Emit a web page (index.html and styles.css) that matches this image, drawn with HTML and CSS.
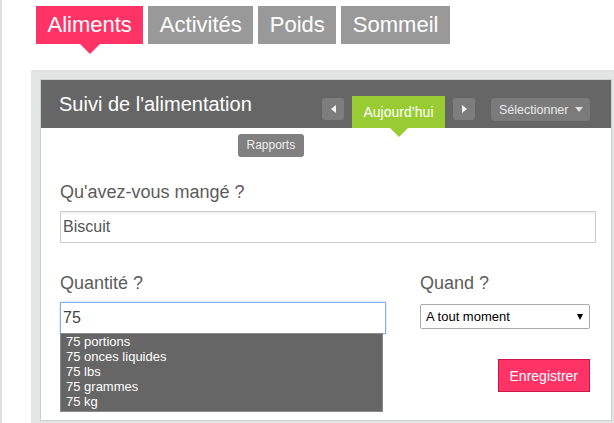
FILE: index.html
```html
<!DOCTYPE html>
<html lang="fr">
<head>
<meta charset="utf-8">
<title>Suivi de l'alimentation</title>
<link rel="stylesheet" href="styles.css">
</head>
<body>
<div class="page">
  <nav class="tabs">
    <a class="tab active">Aliments</a>
    <a class="tab">Activités</a>
    <a class="tab">Poids</a>
    <a class="tab">Sommeil</a>
  </nav>
  <div class="board">
    <section class="panel">
      <header class="panel-head">
        <h1 class="panel-title">Suivi de l'alimentation</h1>
        <div class="date-nav">
          <button class="arrow-btn" aria-label="Précédent"><svg width="5" height="8" viewBox="0 0 5 8"><polygon points="5,0 0,4 5,8" fill="#f2f2f2"/></svg></button>
          <span class="today">Aujourd’hui</span>
          <button class="arrow-btn" aria-label="Suivant"><svg width="5" height="8" viewBox="0 0 5 8"><polygon points="0,0 5,4 0,8" fill="#f2f2f2"/></svg></button>
          <button class="select-btn">Sélectionner<span class="caret"></span></button>
        </div>
      </header>
      <div class="panel-body">
        <div class="report-row"><button class="report-btn">Rapports</button></div>
        <label class="field-label">Qu'avez-vous mangé ?</label>
        <input class="text-input food-input" type="text" value="Biscuit">
        <div class="form-row">
          <div class="qty-col">
            <label class="field-label">Quantité ?</label>
            <input class="text-input qty-input" type="text" value="75">
            <ul class="suggest">
              <li>75 portions</li>
              <li>75 onces liquides</li>
              <li>75 lbs</li>
              <li>75 grammes</li>
              <li>75 kg</li>
            </ul>
          </div>
          <div class="when-col">
            <label class="field-label">Quand ?</label>
            <div class="select">A tout moment<span class="select-arrow"></span></div>
            <div class="actions"><button class="save-btn">Enregistrer</button></div>
          </div>
        </div>
      </div>
    </section>
  </div>
</div>
</body>
</html>
```

FILE: styles.css
```css
html, body {
  margin: 0;
  padding: 0;
  background: #fff;
  font-family: "Liberation Sans", Arial, sans-serif;
}

.page {
  box-sizing: border-box;
  min-height: 423px;
  height: 423px;
  overflow: hidden;
  border-left: 2px solid #dedede;
  padding-top: 6px;
}

/* top tabs */
.tabs {
  display: flex;
  gap: 5px;
  margin-left: 34px;
}

.tab {
  position: relative;
  display: block;
  height: 38px;
  line-height: 38px;
  padding: 0 11.5px;
  font-size: 22px;
  color: #fff;
  background: #999;
}

.tab.active {
  background: #ff3366;
}

.tab.active::after {
  content: "";
  position: absolute;
  left: 50%;
  bottom: -10px;
  margin-left: -10px;
  border-left: 10px solid transparent;
  border-right: 10px solid transparent;
  border-top: 10px solid #ff3366;
}

/* board */
.board {
  margin-top: 26px;
  margin-left: 29px;
  padding: 9px 2px 4px 9px;
  background: #e3e5e4;
}

.panel {
  background: #fff;
  border: 1px solid #cfcfcf;
}

.panel-head {
  display: flex;
  height: 48px;
  background: #666;
  padding-right: 21px;
}

.panel-title {
  margin: 0;
  padding-left: 18px;
  font-size: 20px;
  font-weight: normal;
  line-height: 48px;
  color: #fff;
}

.date-nav {
  margin-left: auto;
  display: flex;
  align-items: flex-end;
}

.arrow-btn {
  display: flex;
  align-items: center;
  justify-content: center;
  width: 22px;
  height: 22px;
  margin-bottom: 8px;
  padding: 0;
  border: 0;
  border-radius: 3px;
  background: #7d7d7d;
}

.today {
  position: relative;
  width: 93px;
  height: 32px;
  margin: 0 8px;
  line-height: 32px;
  text-align: center;
  font-size: 14px;
  color: #fff;
  background: #99cc33;
}

.today::after {
  content: "";
  position: absolute;
  left: 50%;
  bottom: -9px;
  margin-left: -9px;
  border-left: 9px solid transparent;
  border-right: 9px solid transparent;
  border-top: 9px solid #99cc33;
}

.select-btn {
  display: flex;
  align-items: center;
  box-sizing: border-box;
  width: 99px;
  height: 23px;
  margin-left: 16px;
  margin-bottom: 7px;
  padding: 0 7px 0 8px;
  border: 0;
  border-radius: 4px;
  background: #7b7b7b;
  color: #e8e8e8;
  font-family: "Liberation Sans", Arial, sans-serif;
  font-size: 12.5px;
}

.caret {
  margin-left: auto;
  border-left: 4.5px solid transparent;
  border-right: 4.5px solid transparent;
  border-top: 5px solid #e0e0e0;
}

/* body */
.panel-body {
  padding: 0 15px 8px 19px;
}

.report-row {
  margin-top: 6px;
  height: 23px;
  padding-left: 178px;
}

.report-btn {
  height: 23px;
  padding: 0 8.5px;
  border: 0;
  border-radius: 3px;
  background: #808080;
  color: #eee;
  font-family: "Liberation Sans", Arial, sans-serif;
  font-size: 12px;
  line-height: 23px;
}

.field-label {
  display: block;
  margin: 25px 0 0;
  font-size: 18px;
  line-height: 20px;
  color: #5c5c5c;
}

.text-input {
  display: block;
  box-sizing: border-box;
  width: 100%;
  height: 32px;
  margin: 9px 0 0;
  padding: 0 2px;
  border: 1px solid #cccccc;
  font-family: "Liberation Sans", Arial, sans-serif;
  font-size: 16px;
  color: #555;
  background: #fff;
  outline: none;
}

.food-input {
  box-shadow: inset 0 2px 2px rgba(0, 0, 0, 0.06);
}

.qty-input {
  border-color: #84aee8;
  box-shadow: 0 0 2px rgba(90, 140, 230, 0.45);
  color: #444;
}

.form-row {
  display: grid;
  grid-template-columns: 326px 170px;
  column-gap: 34px;
  margin-top: 30px;
}

.form-row .field-label {
  margin-top: 0;
}

.suggest {
  box-sizing: border-box;
  width: 323px;
  margin: -1px 0 0;
  padding: 0 0 2px 5px;
  list-style: none;
  background: #666;
  border: 1px solid #8a8a8a;
  color: #fff;
  font-size: 13px;
  line-height: 15px;
}

.select {
  display: flex;
  align-items: center;
  box-sizing: border-box;
  height: 25px;
  margin-top: 11px;
  padding: 0 6px 0 5px;
  border: 1px solid #a9a9a9;
  border-radius: 2px;
  font-size: 13px;
  color: #000;
}

.select-arrow {
  margin-left: auto;
  border-left: 3px solid transparent;
  border-right: 3px solid transparent;
  border-top: 6px solid #000;
}

.actions {
  display: flex;
  justify-content: flex-end;
  margin-top: 30px;
}

.save-btn {
  height: 33px;
  padding: 0 11px;
  border: 1px solid #c8174c;
  background: #ff3366;
  color: #fff;
  font-family: "Liberation Sans", Arial, sans-serif;
  font-size: 14px;
}
```
